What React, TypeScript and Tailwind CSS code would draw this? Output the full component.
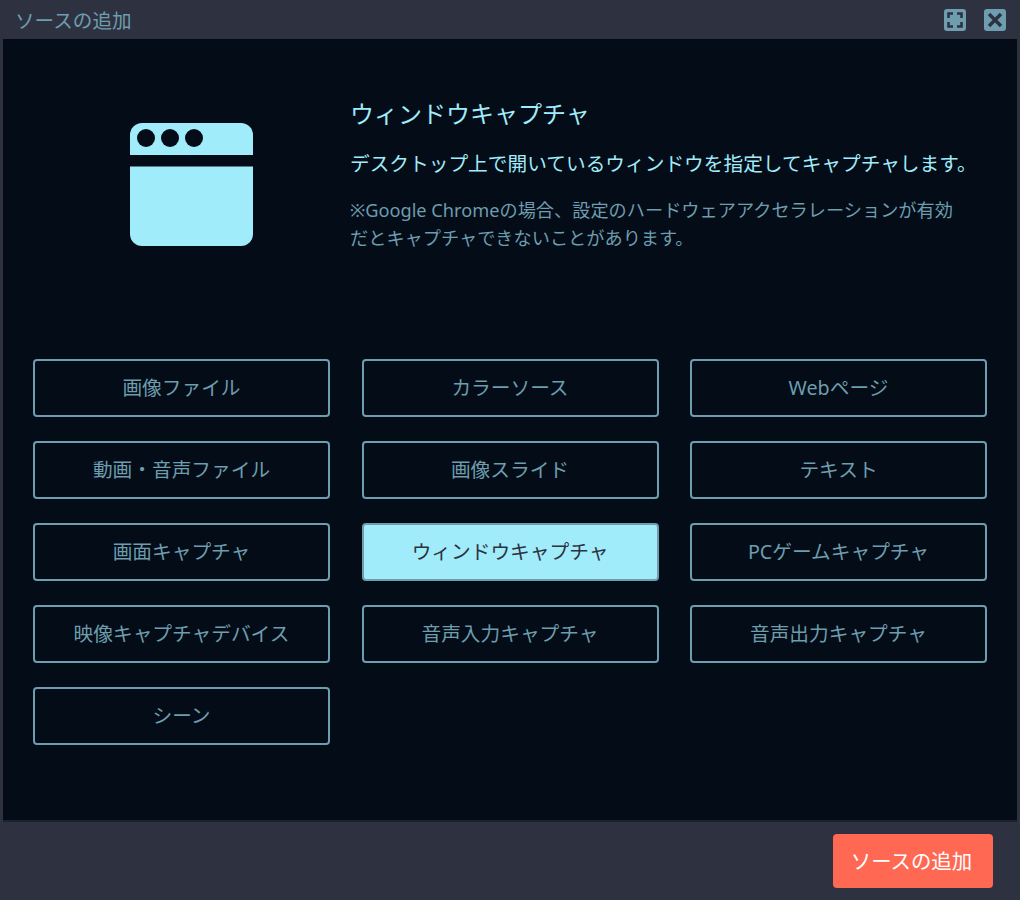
const FONT = "font-['Noto_Sans','Noto_Sans_CJK_JP',sans-serif]";

const sources = [
  '画像ファイル',
  'カラーソース',
  'Webページ',
  '動画・音声ファイル',
  '画像スライド',
  'テキスト',
  '画面キャプチャ',
  'ウィンドウキャプチャ',
  'PCゲームキャプチャ',
  '映像キャプチャデバイス',
  '音声入力キャプチャ',
  '音声出力キャプチャ',
  'シーン',
];

const selected = 'ウィンドウキャプチャ';

function WindowIcon() {
  return (
    <svg width="123" height="123" viewBox="0 0 123 123" className="block">
      <path d="M0 32V12A12 12 0 0 1 12 0H111A12 12 0 0 1 123 12V32Z" fill="#a0ecfb" />
      <path d="M0 43.5H123V111A12 12 0 0 1 111 123H12A12 12 0 0 1 0 111Z" fill="#a0ecfb" />
      <circle cx="16" cy="15" r="9" fill="#030c17" />
      <circle cx="40" cy="15" r="9" fill="#030c17" />
      <circle cx="64" cy="15" r="9" fill="#030c17" />
    </svg>
  );
}

function MaximizeIcon() {
  return (
    <svg width="22" height="22" viewBox="0 0 22 22" className="block">
      <rect width="22" height="22" rx="3" fill="#6d9dae" />
      <path d="M4.5 9V4.5H9M13 4.5H17.5V9M17.5 13V17.5H13M9 17.5H4.5V13" fill="none" stroke="#2e3240" strokeWidth="2.6" />
    </svg>
  );
}

function CloseIcon() {
  return (
    <svg width="22" height="22" viewBox="0 0 22 22" className="block">
      <rect width="22" height="22" rx="3" fill="#6d9dae" />
      <path d="M5 5L17 17M17 5L5 17" fill="none" stroke="#2e3240" strokeWidth="3.4" />
    </svg>
  );
}

export default function App() {
  return (
    <div className={`flex h-[900px] w-[1020px] flex-col bg-[#2e3240] ${FONT}`}>
      <div className="flex h-[39px] shrink-0 items-center justify-between pl-[15px] pr-[14px]">
        <span className="pt-[2px] text-[19.6px] text-[#6d9dae]">ソースの追加</span>
        <div className="flex items-center gap-[18px]">
          <MaximizeIcon />
          <CloseIcon />
        </div>
      </div>

      <div className="mx-[3px] flex h-[783px] flex-col border-b-2 border-[#1d222d] bg-[#030c17] px-[30px]">
        <div className="flex h-[320px] shrink-0">
          <div className="w-[317px] shrink-0 pl-[97px] pt-[84px]">
            <WindowIcon />
          </div>
          <div className="pt-[59px]">
            <h2 className="text-[24px] leading-[32px] text-[#a0ecfb]">ウィンドウキャプチャ</h2>
            <p className="mt-[20px] whitespace-nowrap text-[19.7px] leading-[28px] text-[#a0ecfb]">
              デスクトップ上で開いているウィンドウを指定してキャプチャします。
            </p>
            <p className="mt-[18px] w-[615px] text-[18.2px] leading-[28px] text-[#6d9dae]">
              ※Google Chromeの場合、設定のハードウェアアクセラレーションが有効だとキャプチャできないことがあります。
            </p>
          </div>
        </div>

        <div className="grid grid-cols-[297px_297px_297px] justify-between gap-y-[24px]">
          {sources.map((name) => (
            <button
              key={name}
              className={
                name === selected
                  ? 'h-[58px] rounded-[4px] border-2 border-[#6d9dae] bg-[#a0ecfb] pb-[1px] text-[19.7px] text-[#2e3240]'
                  : 'h-[58px] rounded-[4px] border-2 border-[#6d9dae] bg-transparent pb-[1px] text-[19.7px] text-[#6d9dae]'
              }
            >
              {name}
            </button>
          ))}
        </div>
      </div>

      <div className="flex flex-1 items-start justify-end pr-[27px] pt-[12px]">
        <button className="h-[54px] w-[160px] rounded-[4px] bg-[#ff6852] pr-[3px] text-[20.4px] text-white">ソースの追加</button>
      </div>
    </div>
  );
}
